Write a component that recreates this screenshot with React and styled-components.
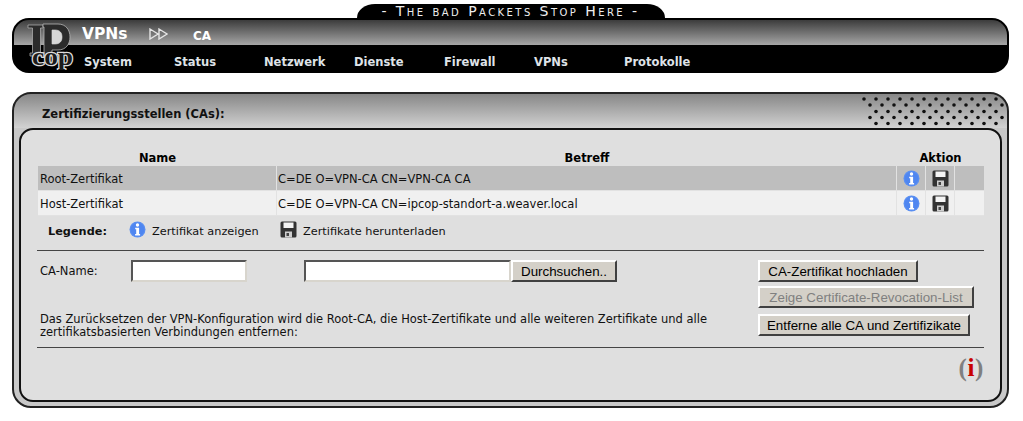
import React from 'react';
import styled, { createGlobalStyle } from 'styled-components';

const GlobalStyle = createGlobalStyle`
  html, body {
    margin: 0;
    padding: 0;
    background: #fff;
    overflow: hidden;
  }
  body {
    font-family: "DejaVu Sans", Verdana, sans-serif;
    font-size: 11.5px;
    color: #111;
  }
`;

const Page = styled.div`
  width: 997px;
  margin-left: 12px;
  padding-top: 4px;
`;

const Tagline = styled.div`
  width: 308px;
  height: 14px;
  margin: 0 auto;
  background: #000;
  border-radius: 18px 18px 0 0 / 14px 14px 0 0;
  color: #eee;
  font-size: 14px;
  line-height: 15px;
  letter-spacing: 2.45px;
  font-variant: small-caps;
  text-align: center;
  white-space: nowrap;
  overflow: hidden;
`;

const Header = styled.header`
  position: relative;
  box-sizing: border-box;
  height: 55px;
  border: 2px solid #000;
  border-radius: 17px;
  overflow: hidden;
  background: #000;
`;

const TitleBar = styled.div`
  display: flex;
  align-items: center;
  height: 25px;
  padding-left: 68px;
  background: linear-gradient(#3c3c3c, #a6a6a6);
  color: #fff;
  font-weight: bold;
`;

const PageName = styled.span`
  font-size: 15.5px;
  width: 67px;
  margin-top: 3px;
`;

const Arrows = styled.svg`
  width: 20px;
  height: 12px;
  margin-top: 2px;
  margin-right: 24px;
`;

const SubName = styled.span`
  font-size: 12px;
  margin-top: 7px;
`;

const Nav = styled.nav`
  display: grid;
  grid-template-columns: repeat(7, 90px);
  padding-left: 70px;
  height: 26px;
  align-items: center;
  color: #dfe3e8;
  font-size: 11.5px;
  font-weight: bold;
`;

const NavItem = styled.span`
  white-space: nowrap;
  margin-top: 7px;
`;

const LogoMark = styled.svg`
  position: absolute;
  left: 13px;
  top: 2px;
  width: 48px;
  height: 48px;
`;

const Panel = styled.main`
  box-sizing: border-box;
  height: 316px;
  margin-top: 19px;
  border: 2px solid #222;
  border-radius: 19px;
  background: linear-gradient(#878787, #d2d2d2 34px, #c8c8c8 34px);
  display: flex;
  flex-direction: column;
  overflow: hidden;
`;

const PanelHead = styled.div`
  height: 34px;
  flex: none;
  display: flex;
  justify-content: space-between;
  align-items: center;
  padding: 0 0 0 28px;
`;

const PanelTitle = styled.h2`
  margin: 6px 0 0;
  font-size: 11.5px;
  font-weight: bold;
  color: #111;
`;

const Dots = styled.svg`
  width: 145px;
  height: 31px;
`;

const Inner = styled.div`
  box-sizing: border-box;
  height: 274px;
  margin: 0 5px;
  padding: 20px 16px 0 16px;
  border: 2px solid #111;
  border-radius: 14px;
  background: #dfdfdf;
`;

const Table = styled.table`
  width: 946px;
  margin-left: 1px;
  border-collapse: separate;
  border-spacing: 0;
  table-layout: fixed;
`;

const Th = styled.th`
  height: 16px;
  padding: 0;
  font-size: 11.5px;
  font-weight: bold;
  text-align: center;
  color: #000;
`;

const Td = styled.td`
  box-sizing: border-box;
  height: 25px;
  padding: 1px 2px 0;
  border-right: 1px solid #e2e2e2;
  border-bottom: 1px solid #e2e2e2;
  background: ${p => (p.$shade ? '#bebebe' : '#f0f0f0')};
  white-space: nowrap;
  & + & {
    padding-left: 1px;
  }
  &:last-child {
    border-right: 0;
  }
`;

const IconCell = styled(Td)`
  padding: 0;
  text-align: center;
  svg {
    display: block;
    margin: 0 auto;
  }
`;

const Legend = styled.div`
  display: flex;
  align-items: center;
  height: 30px;
  padding-left: 11px;
  font-size: 11.3px;
`;

const LegendTitle = styled.b`
  width: 81px;
`;

const LegendItem = styled.span`
  display: flex;
  align-items: center;
  gap: 6px;
  width: ${p => p.$width}px;
  svg {
    margin-top: -3px;
  }
`;

const Rule = styled.hr`
  width: 947px;
  margin: ${p => p.$top || 0}px 0 0;
  border: 0;
  border-top: 1px solid #444;
`;

const FormArea = styled.div`
  display: grid;
  grid-template-columns: 721px auto;
  padding-top: 9px;
  height: 87px;
`;

const Fields = styled.div`
  display: flex;
  flex-direction: column;
  justify-content: space-between;
  padding-left: 3px;
`;

const FieldRow = styled.div`
  display: flex;
  align-items: center;
`;

const FieldLabel = styled.label`
  width: 91px;
`;

const TextInput = styled.input`
  box-sizing: border-box;
  display: block;
  width: ${p => p.$width}px;
  height: 22px;
  margin-right: ${p => p.$gap || 0}px;
  background: #fff;
  border: 2px solid;
  border-color: #555 #d8d5cd #d8d5cd #555;
  padding: 0;
`;

const Button = styled.button`
  box-sizing: border-box;
  display: block;
  height: 22px;
  width: ${p => p.$width}px;
  padding: 0;
  background: #d4d0c8;
  border: 2px solid;
  border-color: #fff #404040 #404040 #fff;
  font-family: "Liberation Sans", Arial, sans-serif;
  font-size: 13.33px;
  color: #000;
  white-space: nowrap;
  &:disabled {
    color: #808080;
  }
`;

const Actions = styled.div`
  display: flex;
  flex-direction: column;
  gap: 4px;
  align-items: flex-start;
  & > :last-child {
    margin-top: 2px;
  }
`;

const Note = styled.p`
  margin: 0 0 8px;
  font-size: 11.47px;
  line-height: 13px;
  white-space: nowrap;
`;

const HelpRow = styled.div`
  display: flex;
  justify-content: flex-end;
  width: 947px;
  padding: 7px 2px 0 0;
`;

const HelpMark = styled.span`
  font-family: "Liberation Serif", "Times New Roman", serif;
  font-size: 25px;
  font-weight: bold;
  line-height: 26px;
  letter-spacing: 0.6px;
  color: #808080;
  b {
    color: #c80000;
  }
`;

const InfoIcon = () => (
  <svg width="17" height="17" viewBox="0 0 17 17">
    <circle cx="8.5" cy="8.5" r="8" fill="#5a8ff2" />
    <circle cx="8.5" cy="8.5" r="6.8" fill="#4f86f0" />
    <circle cx="8.5" cy="4" r="1.7" fill="#fff" />
    <path d="M6.2 6.8h3.9v6.2h1v1.5H6.1V13h1.1V8.3h-1z" fill="#fff" />
  </svg>
);

const SaveIcon = () => (
  <svg width="17" height="17" viewBox="0 0 17 17">
    <path d="M2 .5h13A1.5 1.5 0 0 1 16.500 2v13a1.500 1.500 0 0 1-1.500 1.500H2A1.500 1.500 0 0 1 .5 15V2A1.500 1.500 0 0 1 2 .5z" fill="#333" />
    <rect x="3.500" y="1.500" width="10" height="5.500" fill="#f4f4f4" />
    <rect x="5" y="10.500" width="7" height="6" fill="#cfcfcf" />
    <rect x="6.500" y="12" width="2.500" height="3" fill="#444" />
  </svg>
);

const Logo = () => (
  <LogoMark viewBox="0 0 48 48">
    <path
      d="M1 3h15v3h-2.500v25H16v3H3v-3h2.500V6H1z"
      fill="#2b2b2b"
      stroke="#a8a8a8"
      strokeWidth="0.8"
    />
    <path
      fillRule="evenodd"
      d="M16 2h15c8 0 12 6 12 13s-4 13-12 13h-6v6h-9v-3h1V5h-1zM25 8v14h3c5 0 7-3 7-7s-2-7-7-7z"
      fill="#2b2b2b"
      stroke="#b4b4b4"
      strokeWidth="0.8"
    />
    <path d="M25 8v14h3c5 0 7-3 7-7s-2-7-7-7z" fill="#d6d6d6" />
    <text
      x="5"
      y="43"
      fontFamily="Liberation Serif"
      fontWeight="bold"
      fontSize="26"
      textLength="41"
      lengthAdjust="spacingAndGlyphs"
      fill="#1c1c1c"
      stroke="#dcdcdc"
      strokeWidth="2.500"
      paintOrder="stroke"
    >
      cop
    </text>
  </LogoMark>
);

const dotRows = [
  { y: 3, from: 0 },
  { y: 9, from: 6 },
  { y: 15.500, from: 12 },
  { y: 21.500, from: 6 },
  { y: 27.500, from: 12 },
];

const DotPattern = () => (
  <Dots viewBox="0 0 145 31">
    {dotRows.map(row =>
      Array.from({ length: Math.floor((142 - row.from) / 12) + 1 }, (_, i) => (
        <circle key={`${row.y}-${i}`} cx={2 + row.from + i * 12} cy={row.y} r="1.800" fill="#111" />
      ))
    )}
  </Dots>
);

const navItems = ['System', 'Status', 'Netzwerk', 'Dienste', 'Firewall', 'VPNs', 'Protokolle'];

const certs = [
  { name: 'Root-Zertifikat', subject: 'C=DE O=VPN-CA CN=VPN-CA CA', shade: true },
  { name: 'Host-Zertifikat', subject: 'C=DE O=VPN-CA CN=ipcop-standort-a.weaver.local', shade: false },
];

export default function App() {
  return (
    <>
      <GlobalStyle />
      <Page>
        <Tagline>- The bad Packets Stop Here -</Tagline>
        <Header>
          <TitleBar>
            <PageName>VPNs</PageName>
            <Arrows viewBox="0 0 20 12">
              <path d="M1 1l8 5-8 5zM10 1l8 5-8 5z" fill="none" stroke="#e4e4e4" strokeWidth="1.400" />
            </Arrows>
            <SubName>CA</SubName>
          </TitleBar>
          <Nav>
            {navItems.map(item => (
              <NavItem key={item}>{item}</NavItem>
            ))}
          </Nav>
          <Logo />
        </Header>

        <Panel>
          <PanelHead>
            <PanelTitle>Zertifizierungsstellen (CAs):</PanelTitle>
            <DotPattern />
          </PanelHead>
          <Inner>
            <Table>
              <colgroup>
                <col style={{ width: 239 }} />
                <col style={{ width: 620 }} />
                <col style={{ width: 29 }} />
                <col style={{ width: 29 }} />
                <col style={{ width: 29 }} />
              </colgroup>
              <thead>
                <tr>
                  <Th>Name</Th>
                  <Th>Betreff</Th>
                  <Th colSpan={3}>Aktion</Th>
                </tr>
              </thead>
              <tbody>
                {certs.map(cert => (
                  <tr key={cert.name}>
                    <Td $shade={cert.shade}>{cert.name}</Td>
                    <Td $shade={cert.shade}>{cert.subject}</Td>
                    <IconCell $shade={cert.shade}><InfoIcon /></IconCell>
                    <IconCell $shade={cert.shade}><SaveIcon /></IconCell>
                    <IconCell $shade={cert.shade} />
                  </tr>
                ))}
              </tbody>
            </Table>

            <Legend>
              <LegendTitle>Legende:</LegendTitle>
              <LegendItem $width={151}><InfoIcon />Zertifikat anzeigen</LegendItem>
              <LegendItem $width={200}><SaveIcon />Zertifikate herunterladen</LegendItem>
            </Legend>
            <Rule $top={4} />

            <FormArea>
              <Fields>
                <FieldRow>
                  <FieldLabel>CA-Name:</FieldLabel>
                  <TextInput $width={116} $gap={57} />
                  <TextInput $width={207} />
                  <Button type="button" $width={106}>Durchsuchen..</Button>
                </FieldRow>
                <Note>
                  Das Zurücksetzen der VPN-Konfiguration wird die Root-CA, die Host-Zertifikate und alle weiteren Zertifikate und alle
                  <br />
                  zertifikatsbasierten Verbindungen entfernen:
                </Note>
              </Fields>
              <Actions>
                <Button type="button" $width={160}>CA-Zertifikat hochladen</Button>
                <Button type="button" $width={216} disabled>Zeige Certificate-Revocation-List</Button>
                <Button type="button" $width={212}>Entferne alle CA und Zertifizikate</Button>
              </Actions>
            </FormArea>
            <Rule />
            <HelpRow>
              <HelpMark>(<b>i</b>)</HelpMark>
            </HelpRow>
          </Inner>
        </Panel>
      </Page>
    </>
  );
}
